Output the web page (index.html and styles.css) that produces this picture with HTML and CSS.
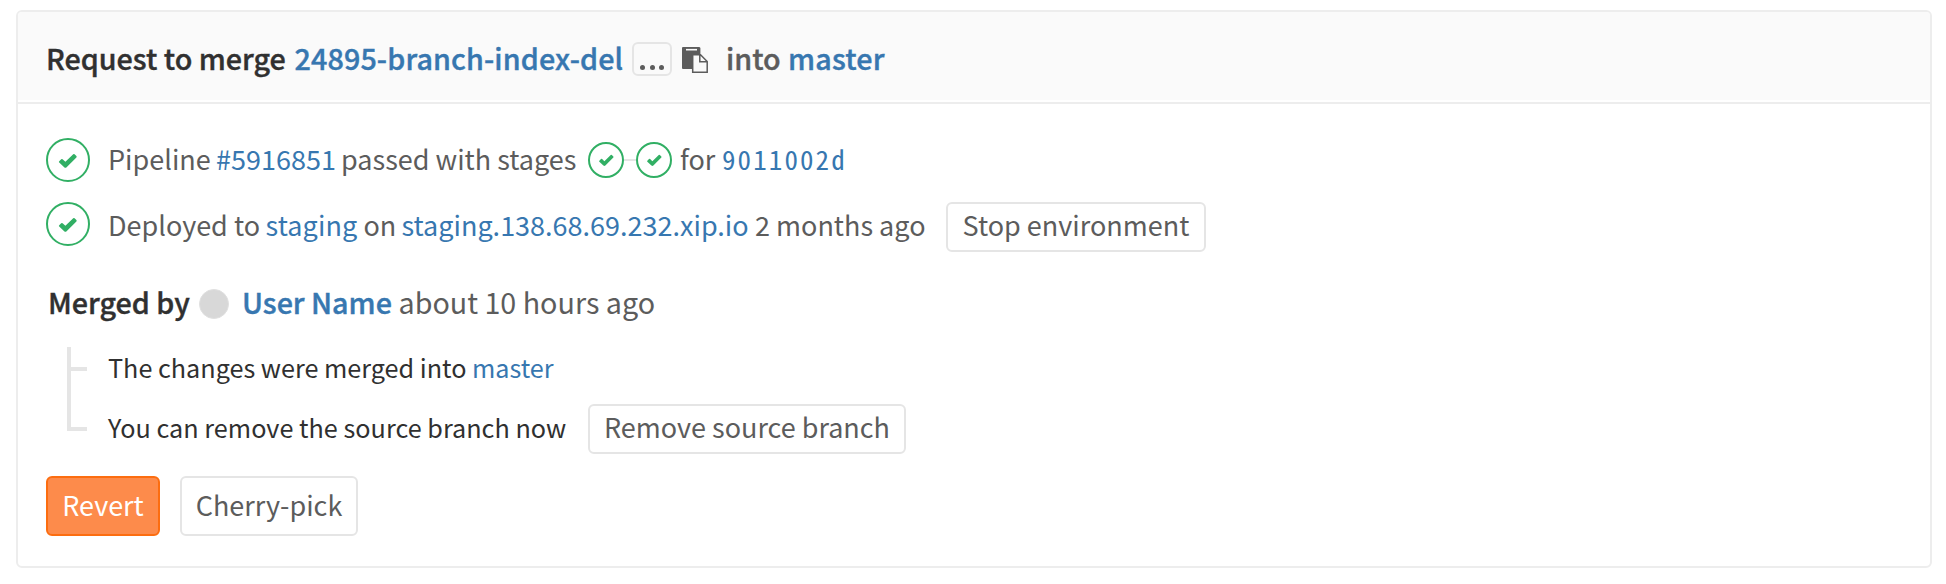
FILE: index.html
```html
<!DOCTYPE html>
<html lang="en">
<head>
<meta charset="utf-8">
<title>Merge request</title>
<link rel="stylesheet" href="styles.css">
</head>
<body>
<svg width="0" height="0" class="defs">
  <symbol id="check" viewBox="0 0 20 16"><path d="M1.2 8.2 L3.2 6.2 Q3.9 5.6 4.6 6.2 L7.4 8.8 L15.2 1.2 Q15.9 .6 16.6 1.2 L18.4 3 Q19 3.7 18.4 4.4 L8.6 14.2 Q7.4 15.3 6.2 14.2 L1.2 9.6 Q.5 8.9 1.2 8.2Z" fill="currentColor"/></symbol>
</svg>
<section class="card">
  <header class="head">
    <span class="t b dark h1">Request to merge</span>
    <a class="t b h2">24895-branch-index-del</a>
    <span class="dots"><i></i><i></i><i></i></span>
    <svg class="clip" width="26" height="26" viewBox="0 0 26 26"><path d="M1 0H17Q18 0 18.4 1V7H10V22H1Q0 22 0 21V1Q0 0 1 0Z" fill="#5c5c5c"/><path d="M4 2.7H15" stroke="#fafafa" stroke-width="1.6"/><path d="M10.7 7.7H18.5L25.2 14.5V25.2H10.7ZM17.8 7.7V14.8H25" fill="#fafafa" stroke="#5c5c5c" stroke-width="1.5"/></svg>
    <span class="t b h3">into</span>
    <a class="t b h4">master</a>
  </header>
  <div class="body">
    <div class="row pipeline">
      <span class="status"><svg width="20" height="16"><use href="#check"/></svg></span>
      <span class="t p1">Pipeline</span>
      <a class="t p2">#5916851</a>
      <span class="t p3">passed with stages</span>
      <span class="stage"><svg width="17" height="13"><use href="#check"/></svg></span>
      <span class="link"></span>
      <span class="stage"><svg width="17" height="13"><use href="#check"/></svg></span>
      <span class="t p4">for</span>
      <a class="t mono">9011002d</a>
    </div>
    <div class="row deploy">
      <span class="status"><svg width="20" height="16"><use href="#check"/></svg></span>
      <span class="t d1">Deployed to</span>
      <a class="t d2">staging</a>
      <span class="t d3">on</span>
      <a class="t d4">staging.138.68.69.232.xip.io</a>
      <span class="t d5">2 months ago</span>
      <button class="btn stop">Stop environment</button>
    </div>
    <div class="row merged">
      <span class="t b dark m1">Merged by</span>
      <span class="avatar"></span>
      <a class="t b m2">User Name</a>
      <span class="t">about 10 hours ago</span>
    </div>
    <ul class="tree">
      <li class="first"><span class="t dark l1">The changes were merged into</span><a class="t">master</a></li>
      <li class="last"><span class="t dark l3">You can remove the source branch now</span><button class="btn remove">Remove source branch</button></li>
    </ul>
    <div class="actions">
      <button class="btn tall revert">Revert</button>
      <button class="btn tall pick">Cherry-pick</button>
    </div>
  </div>
</section>
</body>
</html>
```
FILE: styles.css
```css
* { box-sizing: border-box; }
body { margin: 0; padding: 10px 14px 16px 16px; background: #fff; color: #5c5c5c; font-family: "Noto Sans CJK SC", "Noto Sans", sans-serif; font-size: 27px; line-height: 40px; }
.defs { position: absolute; }
.card { width: 1916px; height: 558px; border: 2px solid #ededed; border-radius: 6px; }
.t { white-space: pre; flex: none; }
.b { font-weight: 500; -webkit-text-stroke: .4px currentColor; }
.dark { color: #303030; }
a { color: #3777b0; }

.head { display: flex; align-items: center; height: 92px; padding: 3px 28px 0; background: #fafafa; border-bottom: 2px solid #ededed; box-shadow: inset 0 -2px #fff; border-radius: 4px 4px 0 0; font-size: 28.7px; }
.head .t { margin-bottom: 2px; }
.h1 { width: 248.5px; }
.h2 { width: 329.5px; letter-spacing: .12px; }
.dots { display: flex; gap: 4.5px; justify-content: center; align-items: flex-end; width: 40px; height: 34px; padding-bottom: 4px; margin: 0 10px 0 8px; border: 2px solid #e5e5e5; border-radius: 6px; }
.dots i { width: 5px; height: 5px; border-radius: 50%; background: #5c5c5c; }
.clip { flex: none; margin: 3px 18px 0 0; }
.h3 { width: 62px; }
.h4 { letter-spacing: .2px; }

.body { padding: 26px 28px 0; }
.row { display: flex; align-items: center; }
.status, .stage { display: flex; flex: none; align-items: center; justify-content: center; border: 2px solid #31af64; border-radius: 50%; color: #31af64; }
.status { width: 44px; height: 44px; margin-right: 18px; }
.stage { width: 36px; height: 36px; }
.status svg, .stage svg { margin-top: 1px; }
.link { width: 12px; height: 2px; background: #e5e5e5; }

.pipeline { height: 60px; }
.pipeline .t { margin-bottom: 2px; }
.p1 { width: 108px; }
.p2 { width: 125px; }
.p3 { width: 247px; }
.p4 { width: 41px; margin-left: 8px; }
.mono { font-family: "Noto Sans Mono CJK SC", "DejaVu Sans Mono", monospace; letter-spacing: 2.1px; padding-left: 1px; }

.deploy { height: 50px; margin-top: 12px; }
.deploy .t { margin-bottom: 4px; }
.deploy .status { margin-bottom: 6px; }
.d1 { width: 157.5px; }
.d2 { width: 98px; letter-spacing: .1px; }
.d3 { width: 38px; }
.d4 { width: 353.5px; }
.d5 { width: 191px; }

.btn { flex: none; height: 50px; padding: 0 0 4px; background: #fff; border: 2px solid #e5e5e5; border-radius: 6px; color: #5c5c5c; font: inherit; font-size: 27px; line-height: 40px; text-align: center; white-space: nowrap; }
.stop { width: 260px; }
.remove { width: 318px; }

.merged { height: 40px; margin-top: 32px; font-size: 28.7px; }
.merged .t { margin-bottom: 5px; }
.m1 { width: 153px; padding-left: 2px; }
.avatar { width: 30px; height: 30px; margin-right: 13px; border-radius: 50%; background: #d8d8d8; border: 1px solid #e0e0e0; }
.m2 { width: 156.5px; }

.tree { position: relative; list-style: none; margin: 23px 0 0; padding: 0; font-size: 25.2px; }
.tree::before { content: ""; position: absolute; left: 21px; top: 0; width: 16px; height: 80px; border: solid #e5e5e5; border-width: 0 0 4px 4px; }
.tree li { display: flex; align-items: center; }
.first { height: 40px; }
.first::before { content: ""; width: 20px; height: 4px; margin: 4px 21px 0; background: #e5e5e5; }
.last { height: 50px; margin-top: 17px; padding-left: 62px; }
.last .t { margin-bottom: 4px; }
.l1 { width: 364px; }
.l3 { width: 480px; letter-spacing: .02px; }

.actions { display: flex; gap: 20px; margin-top: 22px; }
.tall { height: 60px; padding-bottom: 2px; }
.revert { width: 114px; background: #fd8b4b; border-color: #fc6d10; color: #fff; }
.pick { width: 178px; }
```
